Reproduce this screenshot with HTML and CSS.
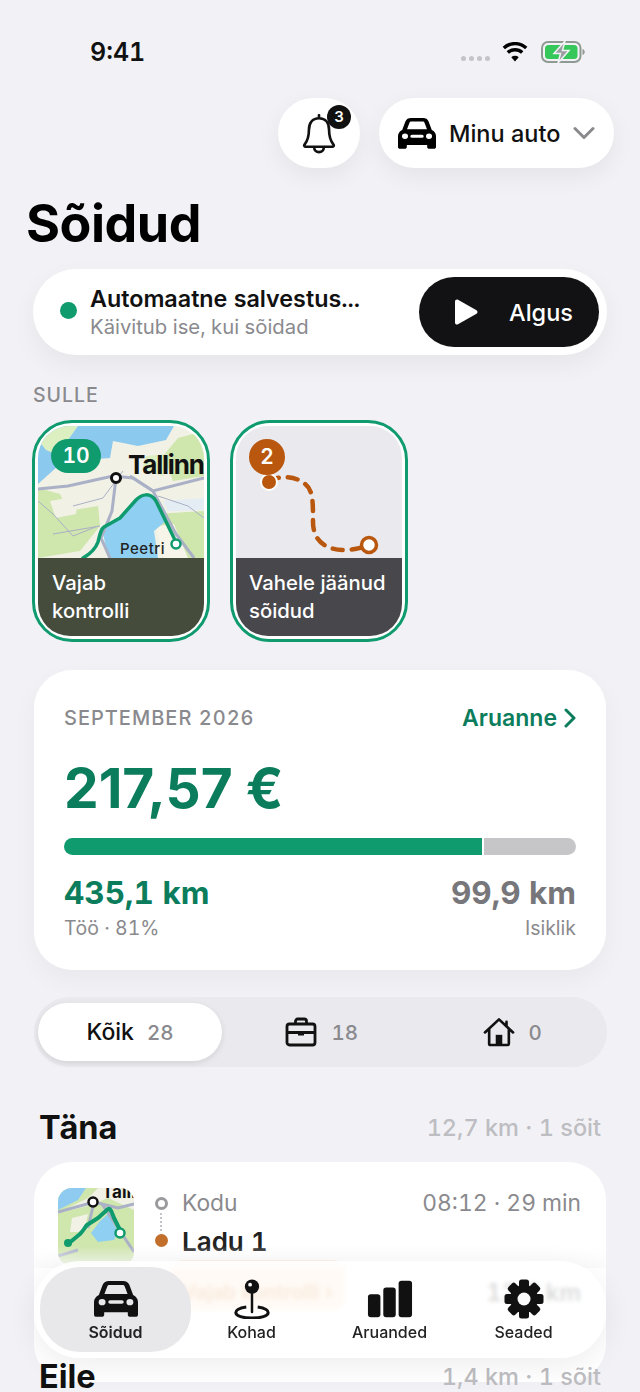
FILE: index.html
```html
<!DOCTYPE html>
<html lang="et">
<head>
    <meta charset="UTF-8">
    <meta name="viewport" content="width=device-width, initial-scale=1.0">
    <title>Sõidud</title>
    <link rel="stylesheet" href="styles.css">
</head>
<body>
<svg class="defs" width="0" height="0">
    <symbol id="car" viewBox="2.5 3.6 19 17.5" preserveAspectRatio="none">
        <path fill-rule="evenodd" d="M4.6 10.4 6.2 5.6C6.7 4.2 7.6 3.6 9 3.6h6c1.4 0 2.3.6 2.8 2l1.6 4.8c1.300.7 2.100 1.900 2.100 3.400v6.200c0 .6-.4 1-1 1h-2.400c-.6 0-1-.4-1-1v-1.200H6.900v1.200c0 .6-.4 1-1 1H3.500c-.6 0-1-.4-1-1v-6.200c0-1.500.8-2.700 2.100-3.400ZM7 9.900h10l-1.200-3.500c-.2-.6-.5-.8-1.100-.8H9.300c-.6 0-.9.2-1.100.8ZM6 12.400a1.500 1.500 0 1 0 0 3 1.500 1.500 0 0 0 0-3Zm12 0a1.500 1.500 0 1 0 0 3 1.500 1.500 0 0 0 0-3ZM9.500 13a.8.8 0 0 0 0 1.700h5a.8.8 0 0 0 0-1.700Z"/>
    </symbol>
</svg>

<div class="screen">
    <div class="statusbar">
        <span class="clock">9:41</span>
        <div class="status-icons">
            <span class="signal"><i></i><i></i><i></i><i></i></span>
            <svg class="wifi" viewBox="0 0 26 20">
                <path d="M13 19.5 9.3 15.3a5.5 5.5 0 0 1 7.4 0Z"/>
                <path class="wifi-arc" d="M5.800 10.600a10.500 10.500 0 0 1 14.400 0M1.800 6a16.500 16.500 0 0 1 22.400 0"/>
            </svg>
            <svg class="battery" viewBox="0 0 44 22">
                <rect x="1" y="1" width="38.500" height="20" rx="6" fill="none" stroke="#8f9a92" stroke-width="2"/>
                <rect x="4" y="4" width="32.500" height="14" rx="3.500" fill="#35c759"/>
                <path d="M41.500 8v6c1.500-.5 2.200-1.700 2.200-3s-.7-2.500-2.200-3Z" fill="#8f9a92"/>
                <path d="M24 0 13 12.500h6.500L17 22l11-12.500h-6.500Z" fill="#9a9ea0" stroke="#f2f2f6" stroke-width="1.500"/>
            </svg>
        </div>
    </div>

    <div class="topbar">
        <button class="bell-btn">
            <svg class="bell" viewBox="3 1 28 33">
                <path d="M17 4.500c-5.500 0-8.300 4-8.300 9.500 0 6.500-1.500 9.500-3.500 12-.8 1-.3 2 .9 2h21.800c1.200 0 1.700-1 .9-2-2-2.500-3.500-5.500-3.500-12 0-5.500-2.800-9.500-8.300-9.500ZM13 28.500a4 4 0 0 0 8 0M17 2v2.500"/>
            </svg>
            <span class="bell-badge">3</span>
        </button>
        <button class="car-btn">
            <svg class="car-icon"><use href="#car"/></svg>
            <span>Minu auto</span>
            <svg class="chev" viewBox="0 0 22 14"><path d="M2 2.500 11 11.500 20 2.500"/></svg>
        </button>
    </div>

    <h1 class="title">Sõidud</h1>

    <div class="auto-card">
        <span class="auto-dot"></span>
        <div class="auto-text">
            <div class="auto-name">Automaatne salvestus...</div>
            <div class="auto-sub">Käivitub ise, kui sõidad</div>
        </div>
        <button class="start-btn">
            <svg class="play" viewBox="0 0 26 28"><path d="M2 3.500C2 1.800 3.600.9 5 1.700l18.500 10.600c1.300.8 1.300 2.600 0 3.400L5 26.300c-1.400.8-3 0-3-1.800Z"/></svg>
            <span>Algus</span>
        </button>
    </div>

    <div class="section-label">SULLE</div>
    <div class="tiles">
        <div class="tile">
            <svg class="tile-art map" viewBox="0 0 166 132" preserveAspectRatio="xMidYMid slice">
                <rect width="166" height="132" fill="#f1f1e6"/>
                <path d="M0 0H136L128 14 100 20 75 15 72 32 45 34 20 40 0 58Z" fill="#8cc9ef"/>
                <path d="M0 14 18 0H40L30 14 22 30 8 24Z" fill="#dcefc0"/>
                <path d="M125 30 140 12 166 5V50L135 55Z" fill="#cfe6ad"/>
                <path d="M108 30 130 28 125 50 104 44Z" fill="#dcefc0"/>
                <path d="M0 62 22 68 30 85 60 80 62 100 42 125 0 132Z" fill="#cfe6ad"/>
                <path d="M12 75 40 70 38 88 18 92Z" fill="#f1f1e6"/>
                <path d="M118 88 166 85V132H125Z" fill="#cfe6ad"/>
                <path d="M118 100 136 98 150 132H125Z" fill="#f7f4e9"/>
                <path d="M64 102 82 92 98 72 110 68 118 75 128 95 116 105 120 132H70Z" fill="#8fd0f2"/>
                <path d="M125 75 166 72V84L130 85Z" fill="#e3edf3"/>
                <path class="road" d="M0 63 30 60 75 50 95 52 115 65 166 52"/>
                <path class="road" d="M78 52 74 85 63 112 72 132M92 50 115 65 138 108 156 132"/>
                <path class="road thin" d="M0 75 15 88 35 110 60 100M35 80 65 72 85 45M120 70 150 80 166 92M15 108 62 100"/>
                <path class="route" d="M45 132C52 128 57 124 60 116 62 108 63 103 66 101L82 92 98 74C104 68 112 66 118 75L136 112"/>
                <circle cx="138" cy="118" r="4.500" fill="#fff" stroke="#0f9b6e" stroke-width="2.500"/>
                <circle cx="78" cy="52" r="4.500" fill="#fff" stroke="#111" stroke-width="3"/>
                <text x="90" y="48" class="map-big">Tallinn</text>
                <text x="82" y="128" class="map-small">Peetri</text>
            </svg>
            <span class="tile-badge green">10</span>
            <div class="tile-caption olive">Vajab<br>kontrolli</div>
        </div>
        <div class="tile grey">
            <svg class="tile-art" viewBox="0 0 166 132">
                <rect width="166" height="132" fill="#e9e9ee"/>
                <path class="missed" d="M33 54C45 50 58 50 66 56 77 62 77 72 77 96 77 115 90 124 108 124 118 124 124 122 132 120"/>
                <circle cx="33" cy="56" r="8" fill="#b9570f" stroke="#fff" stroke-width="2"/>
                <circle cx="133" cy="119" r="7.500" fill="#fff" stroke="#b9570f" stroke-width="3.500"/>
            </svg>
            <span class="tile-badge orange">2</span>
            <div class="tile-caption slate">Vahele jäänud<br>sõidud</div>
        </div>
    </div>

    <div class="stats-card">
        <div class="stats-head">
            <span class="stats-month">SEPTEMBER 2026</span>
            <span class="stats-link">Aruanne
                <svg class="link-chev" viewBox="0 0 12 20"><path d="M2 2 10 10 2 18"/></svg>
            </span>
        </div>
        <div class="stats-amount">217,57 €</div>
        <div class="bar">
            <div class="bar-work" style="width: 81.7%"></div>
            <div class="bar-private"></div>
        </div>
        <div class="stats-foot">
            <div>
                <div class="km work">435,1 km</div>
                <div class="km-label">Töö · 81%</div>
            </div>
            <div class="right">
                <div class="km private">99,9 km</div>
                <div class="km-label">Isiklik</div>
            </div>
        </div>
    </div>

    <div class="segment">
        <div class="seg seg-on"><span class="seg-name">Kõik</span><span class="seg-num">28</span></div>
        <div class="seg">
            <svg class="seg-icon" viewBox="0 0 32 30"><path d="M4.500 7h23c1.400 0 2.500 1.100 2.500 2.500v16c0 1.400-1.100 2.500-2.500 2.500h-23C3.100 28 2 26.900 2 25.500v-16C2 8.100 3.100 7 4.500 7ZM10.500 7V4.200c0-1.200 1-2.200 2.200-2.200h6.600c1.200 0 2.200 1 2.200 2.200V7M2 15.500h28"/><path class="seg-fill" d="M13 14h6v4.500h-6Z"/></svg>
            <span class="seg-num">18</span>
        </div>
        <div class="seg">
            <svg class="seg-icon" viewBox="0 0 34 32"><path d="M2 16.500 17 2.500l15 14M6.500 13v15.500c0 .8.600 1.400 1.400 1.400h18.200c.8 0 1.400-.6 1.400-1.400V13M25 5v5"/><path class="seg-fill" d="M13.500 19h7v11h-7Z"/></svg>
            <span class="seg-num">0</span>
        </div>
    </div>

    <div class="day-head">
        <span class="day-name">Täna</span>
        <span class="day-sum">12,7 km · 1 sõit</span>
    </div>
    <div class="trip-card">
        <div class="trip-row">
            <svg class="thumb" viewBox="0 0 76 78">
                <rect width="76" height="78" fill="#cfe6ad"/>
                <path d="M0 0H28L20 12 0 22Z" fill="#8fcbf0"/>
                <path d="M0 25 30 18 50 10 76 22V0H40L30 10Z" fill="#f1f1e6"/>
                <path d="M14 30 30 26 26 44 12 44Z" fill="#f1f1e6"/>
                <path d="M33 45 42 33 50 26 60 44 56 52 40 54Z" fill="#8fd0f2"/>
                <path class="road" d="M0 24 36 14 60 20 76 16M36 14 30 40M44 16 76 64M0 68 20 62"/>
                <path class="route thumb-route" d="M10 56 22 46C26 42 27 39 29 37L40 30 50 21C52 20 53 22 56 30L62 42"/>
                <circle cx="62" cy="45" r="4.500" fill="#fff" stroke="#0f9b6e" stroke-width="2.500"/>
                <circle cx="35" cy="14" r="4.500" fill="#fff" stroke="#111" stroke-width="2.500"/>
                <circle cx="10" cy="55" r="4" fill="#0f9b6e"/>
                <text x="44" y="10" class="thumb-text">Tallinn</text>
            </svg>
            <div class="trip-dots">
                <span class="ring"></span>
                <span class="dots"></span>
                <span class="dot-end"></span>
            </div>
            <div class="trip-info">
                <div class="trip-top"><span class="trip-from">Kodu</span><span class="trip-time">08:12 · 29 min</span></div>
                <div class="trip-to">Ladu 1</div>
            </div>
        </div>
        <div class="trip-bottom">
            <span class="check-chip">Vajab kontrolli ›</span>
            <span class="trip-km">12,7 km</span>
        </div>
    </div>

    <div class="day-head next">
        <span class="day-name">Eile</span>
        <span class="day-sum">1,4 km · 1 sõit</span>
    </div>

    <div class="fade"></div>
    <nav class="tabbar">
        <div class="tab tab-on">
            <svg class="tab-icon car-tab"><use href="#car"/></svg>
            <span>Sõidud</span>
        </div>
        <div class="tab">
            <svg class="tab-icon" viewBox="0 0 40 42">
                <path class="pin-ring" d="M14 29.500C7 30.500 3 32.800 3 35.500 3 38.800 10.600 41 20 41s17-2.200 17-5.500c0-2.700-4-5-11-6"/>
                <rect x="18.700" y="12" width="2.600" height="24" rx="1.300"/>
                <circle cx="20" cy="8" r="7.500"/>
                <circle cx="18" cy="6" r="2" fill="#fff"/>
            </svg>
            <span>Kohad</span>
        </div>
        <div class="tab">
            <svg class="tab-icon" viewBox="0 0 48 40">
                <rect x="1" y="15" width="13" height="24" rx="3"/>
                <rect x="17" y="8" width="13" height="31" rx="3"/>
                <rect x="33" y="1" width="14" height="38" rx="3"/>
            </svg>
            <span>Aruanded</span>
        </div>
        <div class="tab">
            <svg class="tab-icon" viewBox="0 0 40 40">
                <rect x="15" y="0.500" width="10" height="39" rx="2.500"/>
                <rect x="15" y="0.500" width="10" height="39" rx="2.500" transform="rotate(45 20 20)"/>
                <rect x="15" y="0.500" width="10" height="39" rx="2.500" transform="rotate(90 20 20)"/>
                <rect x="15" y="0.500" width="10" height="39" rx="2.500" transform="rotate(135 20 20)"/>
                <circle cx="20" cy="20" r="14"/>
                <circle cx="20" cy="20" r="6.500" fill="#fbfbfc"/>
            </svg>
            <span>Seaded</span>
        </div>
    </nav>
</div>
</body>
</html>
```

FILE: styles.css
```css
* {
    box-sizing: border-box;
}
body {
    margin: 0;
    background-color: #f2f2f6;
    font-family: Inter, "Liberation Sans", sans-serif;
    font-variant-numeric: tabular-nums;
    color: #111;
}
button {
    font-family: inherit;
    border: none;
    cursor: pointer;
}
.defs {
    position: absolute;
}
.screen {
    position: relative;
    width: 640px;
    height: 1392px;
    overflow: hidden;
    padding: 0 33px;
}

/* status bar */
.statusbar {
    display: flex;
    justify-content: space-between;
    align-items: center;
    height: 40px;
    margin: 32px 22px 0 57px;
}
.clock {
    font-size: 25px;
    font-weight: 600;
}
.status-icons {
    display: flex;
    align-items: center;
}
.signal {
    display: flex;
    gap: 3px;
    margin: 12px 12px 0 0;
}
.signal i {
    width: 5px;
    height: 5px;
    border-radius: 50%;
    background-color: #c4c4c8;
}
.wifi {
    width: 26px;
    height: 20px;
    margin-right: 13px;
}
.wifi-arc {
    fill: none;
    stroke: #000;
    stroke-width: 3.4;
}
.battery {
    width: 44px;
    height: 22px;
}

/* top buttons */
.topbar {
    display: flex;
    justify-content: flex-end;
    gap: 19px;
    margin: 26px -7px 0 0;
}
.bell-btn {
    position: relative;
    width: 82px;
    height: 70px;
    border-radius: 38px;
    background-color: #fff;
    box-shadow: 0 8px 24px rgba(0, 0, 0, 0.06);
}
.bell {
    width: 34px;
    height: 40px;
    margin-top: 4px;
    fill: none;
    stroke: #111;
    stroke-width: 2.2;
    stroke-linejoin: round;
    stroke-linecap: round;
}
.bell-badge {
    position: absolute;
    top: 7px;
    left: 49px;
    width: 24px;
    height: 24px;
    line-height: 24px;
    border-radius: 50%;
    background-color: #111;
    color: #fff;
    font-size: 15px;
    font-weight: 600;
    text-align: center;
}
.car-btn {
    display: flex;
    align-items: center;
    width: 235px;
    height: 70px;
    padding: 0 18px 0 19px;
    border-radius: 36px;
    background-color: #fff;
    color: #111;
    font-size: 23.5px;
    font-weight: 500;
    box-shadow: 0 8px 24px rgba(0, 0, 0, 0.06);
}
.car-icon {
    width: 38px;
    height: 31px;
    margin-right: 13px;
}
.chev {
    width: 22px;
    height: 14px;
    margin-left: 13px;
    fill: none;
    stroke: #8a8a8e;
    stroke-width: 3;
    stroke-linecap: round;
    stroke-linejoin: round;
}

.title {
    margin: 26px 0 0 -7px;
    font-size: 52px;
    line-height: 60px;
    font-weight: 700;
    letter-spacing: -0.5px;
    color: #000;
}

/* auto recording card */
.auto-card {
    display: flex;
    align-items: center;
    height: 86px;
    margin-top: 15px;
    padding: 0 8px 0 27px;
    border-radius: 43px;
    background-color: #fff;
    box-shadow: 0 10px 26px rgba(0, 0, 0, 0.05);
}
.auto-dot {
    width: 17px;
    height: 17px;
    margin: -4px 13px 0 0;
    border-radius: 50%;
    background-color: #0f9b6e;
}
.auto-text {
    flex: 1;
}
.auto-name {
    font-size: 23.3px;
    font-weight: 600;
    line-height: 30px;
}
.auto-sub {
    font-size: 20.3px;
    line-height: 26px;
    color: #8a8a8e;
}
.start-btn {
    display: flex;
    align-items: center;
    flex: none;
    width: 180px;
    height: 70px;
    padding: 0 0 0 34px;
    border-radius: 35px;
    background-color: #121214;
    color: #fff;
    font-size: 23.5px;
    font-weight: 500;
}
.play {
    width: 26px;
    height: 28px;
    margin-right: 30px;
    fill: #fff;
}

.section-label {
    margin-top: 28px;
    font-size: 19.5px;
    line-height: 24px;
    letter-spacing: 1px;
    font-weight: 500;
    color: #8a8a8e;
}

/* tiles */
.tiles {
    display: flex;
    gap: 20px;
    margin: 13px 0 0 -1px;
}
.tile {
    position: relative;
    display: flex;
    flex-direction: column;
    width: 178px;
    height: 222px;
    padding: 3px;
    border: 3px solid #0f9b6e;
    border-radius: 40px;
    background-color: #fff;
}
.tile-art {
    display: block;
    width: 166px;
    height: 132px;
    flex: none;
    border-radius: 32px 32px 0 0;
}
.tile-caption {
    flex: 1;
    padding: 11px 14px 0;
    border-radius: 0 0 32px 32px;
    color: #fff;
    font-size: 20.3px;
    line-height: 28px;
    font-weight: 500;
}
.olive {
    background-color: #454c3c;
}
.slate {
    padding-left: 13px;
    background-color: #48484c;
}
.tile-badge {
    position: absolute;
    top: 16px;
    left: 16px;
    height: 34px;
    line-height: 34px;
    border-radius: 17px;
    color: #fff;
    font-size: 21px;
    font-weight: 600;
    text-align: center;
}
.tile-badge.green {
    width: 50px;
    background-color: #0f9b6e;
}
.tile-badge.orange {
    width: 36px;
    height: 36px;
    line-height: 36px;
    border-radius: 50%;
    background-color: #b9570f;
}
.map-big {
    font-family: Inter, sans-serif;
    font-size: 26px;
    font-weight: 700;
    letter-spacing: -1.2px;
    fill: #111;
}
.map-small {
    font-family: Inter, sans-serif;
    font-size: 15px;
    font-weight: 500;
    letter-spacing: 0.5px;
    fill: #222;
}
.road {
    fill: none;
    stroke: #aab0c6;
    stroke-width: 3;
}
.road.thin {
    stroke-width: 1;
}
.route {
    fill: none;
    stroke: #0f9b6e;
    stroke-width: 3.5;
    stroke-linejoin: round;
    stroke-linecap: round;
}
.missed {
    fill: none;
    stroke: #b9570f;
    stroke-width: 4.5;
    stroke-linecap: round;
    stroke-dasharray: 10 9;
}

/* monthly stats */
.stats-card {
    height: 300px;
    margin: 28px 1px 0 1px;
    padding: 35px 30px 0;
    border-radius: 38px;
    background-color: #fff;
    box-shadow: 0 10px 26px rgba(0, 0, 0, 0.04);
}
.stats-head {
    display: flex;
    justify-content: space-between;
    align-items: center;
    height: 26px;
}
.stats-month {
    font-size: 20px;
    font-weight: 500;
    letter-spacing: 1px;
    color: #8a8a8e;
}
.stats-link {
    display: flex;
    align-items: center;
    gap: 7px;
    font-size: 23px;
    font-weight: 600;
    color: #0b7d5c;
}
.link-chev {
    width: 12px;
    height: 20px;
    fill: none;
    stroke: #0b7d5c;
    stroke-width: 3;
    stroke-linecap: round;
    stroke-linejoin: round;
}
.stats-amount {
    margin-top: 25px;
    font-size: 55px;
    line-height: 64px;
    font-weight: 700;
    font-variant-numeric: normal;
    color: #0b7d5c;
}
.bar {
    display: flex;
    gap: 2px;
    height: 17px;
    margin-top: 18px;
    border-radius: 9px;
    overflow: hidden;
}
.bar-work {
    background-color: #0f9b6e;
}
.bar-private {
    flex: 1;
    background-color: #c6c6c8;
}
.stats-foot {
    display: flex;
    justify-content: space-between;
    margin-top: 19px;
}
.right {
    text-align: right;
}
.km {
    font-size: 31.5px;
    line-height: 38px;
    font-weight: 700;
}
.km.work {
    color: #0b7d5c;
}
.km.private {
    color: #77777b;
}
.km-label {
    margin-top: 4px;
    font-size: 19.5px;
    line-height: 24px;
    color: #8a8a8e;
}

/* filter */
.segment {
    display: flex;
    height: 70px;
    margin: 27px 0 0 1px;
    padding: 6px 4px;
    border-radius: 35px;
    background-color: #e9e9ee;
}
.seg {
    flex: 1;
    display: flex;
    align-items: center;
    justify-content: center;
    gap: 14px;
    padding-left: 9px;
    border-radius: 29px;
}
.seg-on {
    flex: none;
    width: 184px;
    gap: 13px;
    padding-left: 0;
    background-color: #fff;
    box-shadow: 0 2px 6px rgba(0, 0, 0, 0.1);
}
.seg-name {
    font-size: 23px;
    font-weight: 500;
}
.seg-num {
    font-size: 20.5px;
    font-weight: 500;
    color: #8a8a8e;
}
.seg-icon {
    width: 32px;
    height: 30px;
    fill: none;
    stroke: #111;
    stroke-width: 2.8;
    stroke-linejoin: round;
    stroke-linecap: round;
}
.seg-fill {
    fill: #111;
    stroke: none;
}

/* trips */
.day-head {
    display: flex;
    justify-content: space-between;
    align-items: center;
    height: 40px;
    margin: 40px 6px 0 6px;
}
.day-head.next {
    position: absolute;
    top: 1356px;
    left: 39px;
    width: 562px;
    margin: 0;
}
.day-name {
    font-size: 32.5px;
    font-weight: 700;
    color: #111;
}
.day-sum {
    font-size: 23.5px;
    font-weight: 500;
    color: #bdbdc2;
}
.trip-card {
    height: 220px;
    margin: 15px 1px 0 1px;
    padding: 26px 25px 0 24px;
    border-radius: 38px;
    background-color: #fff;
}
.trip-row {
    display: flex;
}
.thumb {
    flex: none;
    width: 76px;
    height: 78px;
    border-radius: 14px;
    margin-right: 20px;
}
.thumb-text {
    font-family: Inter, sans-serif;
    font-size: 17px;
    font-weight: 700;
    fill: #111;
}
.thumb-route {
    stroke-width: 4;
}
.trip-dots {
    display: flex;
    flex-direction: column;
    align-items: center;
    width: 14px;
    margin: 9px 14px 0 0;
}
.ring {
    width: 13px;
    height: 13px;
    border: 3px solid #9a9a9e;
    border-radius: 50%;
}
.dots {
    height: 18px;
    margin: 3px 0;
    border-left: 2px dotted #c4c4c8;
}
.dot-end {
    width: 13px;
    height: 13px;
    border-radius: 50%;
    background-color: #c26f2c;
}
.trip-info {
    flex: 1;
}
.trip-top {
    display: flex;
    justify-content: space-between;
    line-height: 30px;
    font-size: 22.8px;
    color: #8a8a8e;
}
.trip-to {
    margin-top: 6px;
    font-size: 26px;
    line-height: 36px;
    font-weight: 600;
    color: #222;
}
.trip-bottom {
    display: flex;
    justify-content: space-between;
    align-items: flex-start;
    margin: -6px 0 0 112px;
}
.check-chip {
    padding: 20px 12px 6px;
    border-radius: 12px;
    background-color: #fde3c8;
    color: #d98a3c;
    font-size: 20px;
    line-height: 24px;
    font-weight: 600;
}
.trip-km {
    padding-top: 18px;
    font-size: 24px;
    font-weight: 600;
    color: #333;
}

/* bottom bar */
.fade {
    position: absolute;
    top: 1246px;
    left: 34px;
    width: 572px;
    height: 22px;
    background: linear-gradient(rgba(255, 255, 255, 0), rgba(250, 250, 252, 0.9));
}
.tabbar {
    position: absolute;
    top: 1261px;
    left: 34px;
    display: grid;
    grid-template-columns: 151px 121px 155px 113px;
    width: 572px;
    height: 97px;
    padding: 6px;
    border-radius: 46px;
    background-color: rgba(255, 255, 255, 0.82);
    -webkit-backdrop-filter: blur(2px);
    backdrop-filter: blur(2px);
    box-shadow: 0 8px 30px rgba(0, 0, 0, 0.07);
}
.tab {
    display: flex;
    flex-direction: column;
    align-items: center;
    padding-top: 12px;
    border-radius: 40px;
    font-size: 16px;
    font-weight: 500;
    color: #222;
}
.tab span {
    margin-top: 3px;
}
.tab-on {
    background-color: #e8e8ea;
    font-weight: 600;
}
.tab-icon {
    width: 46px;
    height: 40px;
    fill: #111;
}
.car-tab {
    width: 44px;
    height: 36px;
    margin: 2px 0;
}
.pin-ring {
    fill: none;
    stroke: #111;
    stroke-width: 3.2;
}
```
